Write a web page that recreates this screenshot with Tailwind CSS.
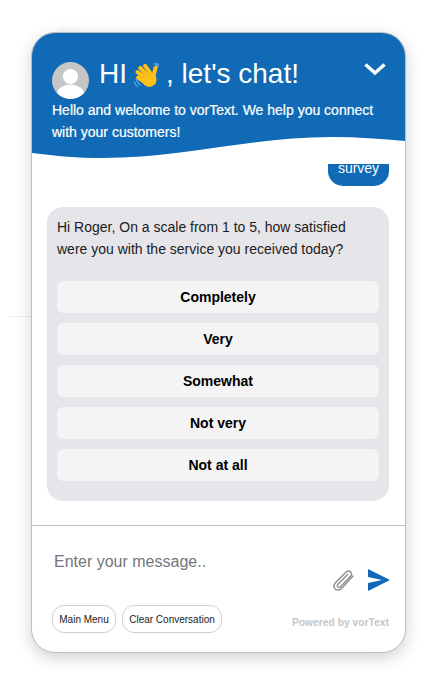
<!DOCTYPE html>
<html lang="en">

<head>
  <meta charset="UTF-8">
  <meta name="viewport" content="width=device-width, initial-scale=1.0">
  <title>vorText Chat</title>
  <script src="https://cdn.jsdelivr.net/npm/@tailwindcss/browser@4"></script>
</head>

<body class="relative bg-white h-[685px] overflow-hidden font-['Liberation_Sans',Arial,sans-serif]">

  <!-- faint page behind the widget -->
  <div class="absolute left-[8px] top-[316px] w-[24px] h-px bg-[#eeeeee]"></div>
  <div class="absolute left-[57px] top-[28px] w-[23px] h-[5px] bg-[#f8f8fc]"></div>

  <div class="relative pt-[32px] pl-[31px]">
    <div class="w-[375px] h-[621px] bg-white border border-[#bdbdbd] rounded-[24px] shadow-[0_5px_16px_rgba(0,0,0,0.18)] overflow-hidden flex flex-col">

      <!-- header -->
      <div class="relative h-[126px] shrink-0 bg-[#106ab5] text-white">
        <div class="flex items-start pl-[20px] pr-[19px]">
          <svg class="mt-[29px] w-[37px] h-[37px] shrink-0 rounded-full" viewBox="0 0 37 37">
            <rect width="37" height="37" fill="#c6c6c6" />
            <circle cx="18.500" cy="14.500" r="7.600" fill="#fff" />
            <ellipse cx="18.500" cy="32" rx="13.500" ry="9.500" fill="#fff" />
          </svg>
          <div class="mt-[25px] ml-[10px] text-[28px] leading-[32px] whitespace-nowrap flex items-center">
            <span>HI</span>
            <svg class="w-[25px] h-[25px] ml-[7px] mr-[7px] mt-[3px]" viewBox="0 0 36 36" fill="none" stroke-linecap="round">
              <path d="M3 23c1 4 3 7 6 9M0 26c1 3 2 6 5 8M28 1c3 0 6 3 6 6M30 -1c3 1 5 3 6 6" stroke="#5dadec" stroke-width="1.600" />
              <path d="M28 19 31 7" stroke="#f0a80c" stroke-width="5.800" />
              <path d="M28 19 31 7" stroke="#fcc21b" stroke-width="4.800" />
              <path d="M16 28 6 21M17 22 5 13M20 19 9 7M25 17 16 4" stroke="#f0a80c" stroke-width="5.800" />
              <path d="M16 28 6 21M17 22 5 13M20 19 9 7M25 17 16 4" stroke="#fcc21b" stroke-width="4.800" />
              <circle cx="22" cy="24" r="10.500" fill="#fcc21b" />
              <path d="M12 19 18 23M15 14 21 20M20 11 24 18" stroke="#f0a80c" stroke-width="0.700" />
            </svg>
            <span>, let's chat!</span>
          </div>
          <svg class="mt-[29px] ml-auto w-[22px] h-[14px] shrink-0" viewBox="0 0 22 14">
            <path d="M1.500 2.500 11 11 20.500 2.500" fill="none" stroke="#fff" stroke-width="3.500" />
          </svg>
        </div>
        <p class="pl-[20px] text-[14px] leading-[22px] [-webkit-text-stroke:0.2px_white]">Hello and welcome to vorText. We help you connect<br>with your customers!</p>
        <svg class="absolute left-0 bottom-0 w-[373px] h-[26px]" viewBox="0 0 373 26" preserveAspectRatio="none">
          <path d="M0 20C25 23 45 25 70 25 150 25 220 4 300 4 325 4 350 6 373 8V26H0Z" fill="#fff" />
        </svg>
      </div>

      <!-- messages -->
      <div class="flex-1 overflow-hidden flex flex-col">
        <div class="mt-[5px] h-[22px] flex justify-end pr-[16px] shrink-0">
          <div class="w-[61px] h-[22px] bg-[#106ab5] text-white text-[14px] leading-[9px] text-center rounded-b-[15px]">survey</div>
        </div>
        <div class="mt-[21px] ml-[15px] mr-[16px] h-[294px] bg-[#e5e5ea] rounded-[16px] px-[10px] pt-[9px] text-[14px] leading-[22px] text-[#1c1c1c]">
          <p>Hi Roger, On a scale from 1 to 5, how satisfied<br>were you with the service you received today?</p>
          <div class="mt-[21px] flex flex-col gap-[10px]">
            <button class="h-[32px] w-full bg-[#f4f4f4] rounded-[6px] text-[14px] font-bold text-black">Completely</button>
            <button class="h-[32px] w-full bg-[#f4f4f4] rounded-[6px] text-[14px] font-bold text-black">Very</button>
            <button class="h-[32px] w-full bg-[#f4f4f4] rounded-[6px] text-[14px] font-bold text-black">Somewhat</button>
            <button class="h-[32px] w-full bg-[#f4f4f4] rounded-[6px] text-[14px] font-bold text-black">Not very</button>
            <button class="h-[32px] w-full bg-[#f4f4f4] rounded-[6px] text-[14px] font-bold text-black">Not at all</button>
          </div>
        </div>
      </div>

      <!-- footer -->
      <div class="h-[127px] shrink-0 border-t border-[#bdbdbd] px-[20px] relative">
        <div class="flex items-start">
          <input class="mt-[25px] flex-1 min-w-0 h-[22px] text-[16px] pl-[2px] outline-none placeholder:text-[#75757c]" placeholder="Enter your message.." />
          <svg class="mt-[43px] w-[24px] h-[24px] shrink-0" viewBox="0 0 24 24" fill="none" stroke="#8e8e8e" stroke-width="1.400" stroke-linecap="round" stroke-linejoin="round">
            <path d="M21 7 9.500 19.500c-2 2-4.800 2-6.300.5-1.700-1.700-1.500-4.300.3-6.200L13.800 3.300c1.500-1.500 3.500-1.600 4.800-.4 1.300 1.300 1.100 3.200-.3 4.700L8.500 17.800c-.8.800-2 .9-2.700.2-.7-.7-.6-1.800.2-2.700L15.800 5.200" />
          </svg>
          <svg class="mt-[43px] ml-[12px] mr-[-5px] w-[22px] h-[22px] shrink-0" viewBox="0 0 22 22">
            <path d="M0 0 22 11 0 22 0 14 14 11 0 8Z" fill="#106ab5" />
          </svg>
        </div>
        <div class="absolute left-[20px] right-[16px] top-[79px] flex items-center gap-[6px]">
          <button class="h-[28px] w-[64px] border border-[#cfcfcf] rounded-[12px] text-[10px] text-[#222]">Main Menu</button>
          <button class="h-[28px] w-[100px] border border-[#cfcfcf] rounded-[12px] text-[10px] text-[#222]">Clear Conversation</button>
          <span class="ml-auto mt-[8px] text-[10.300px] font-bold text-[#c6c6c6]">Powered by vorText</span>
        </div>
      </div>
    </div>
  </div>

</body>

</html>
